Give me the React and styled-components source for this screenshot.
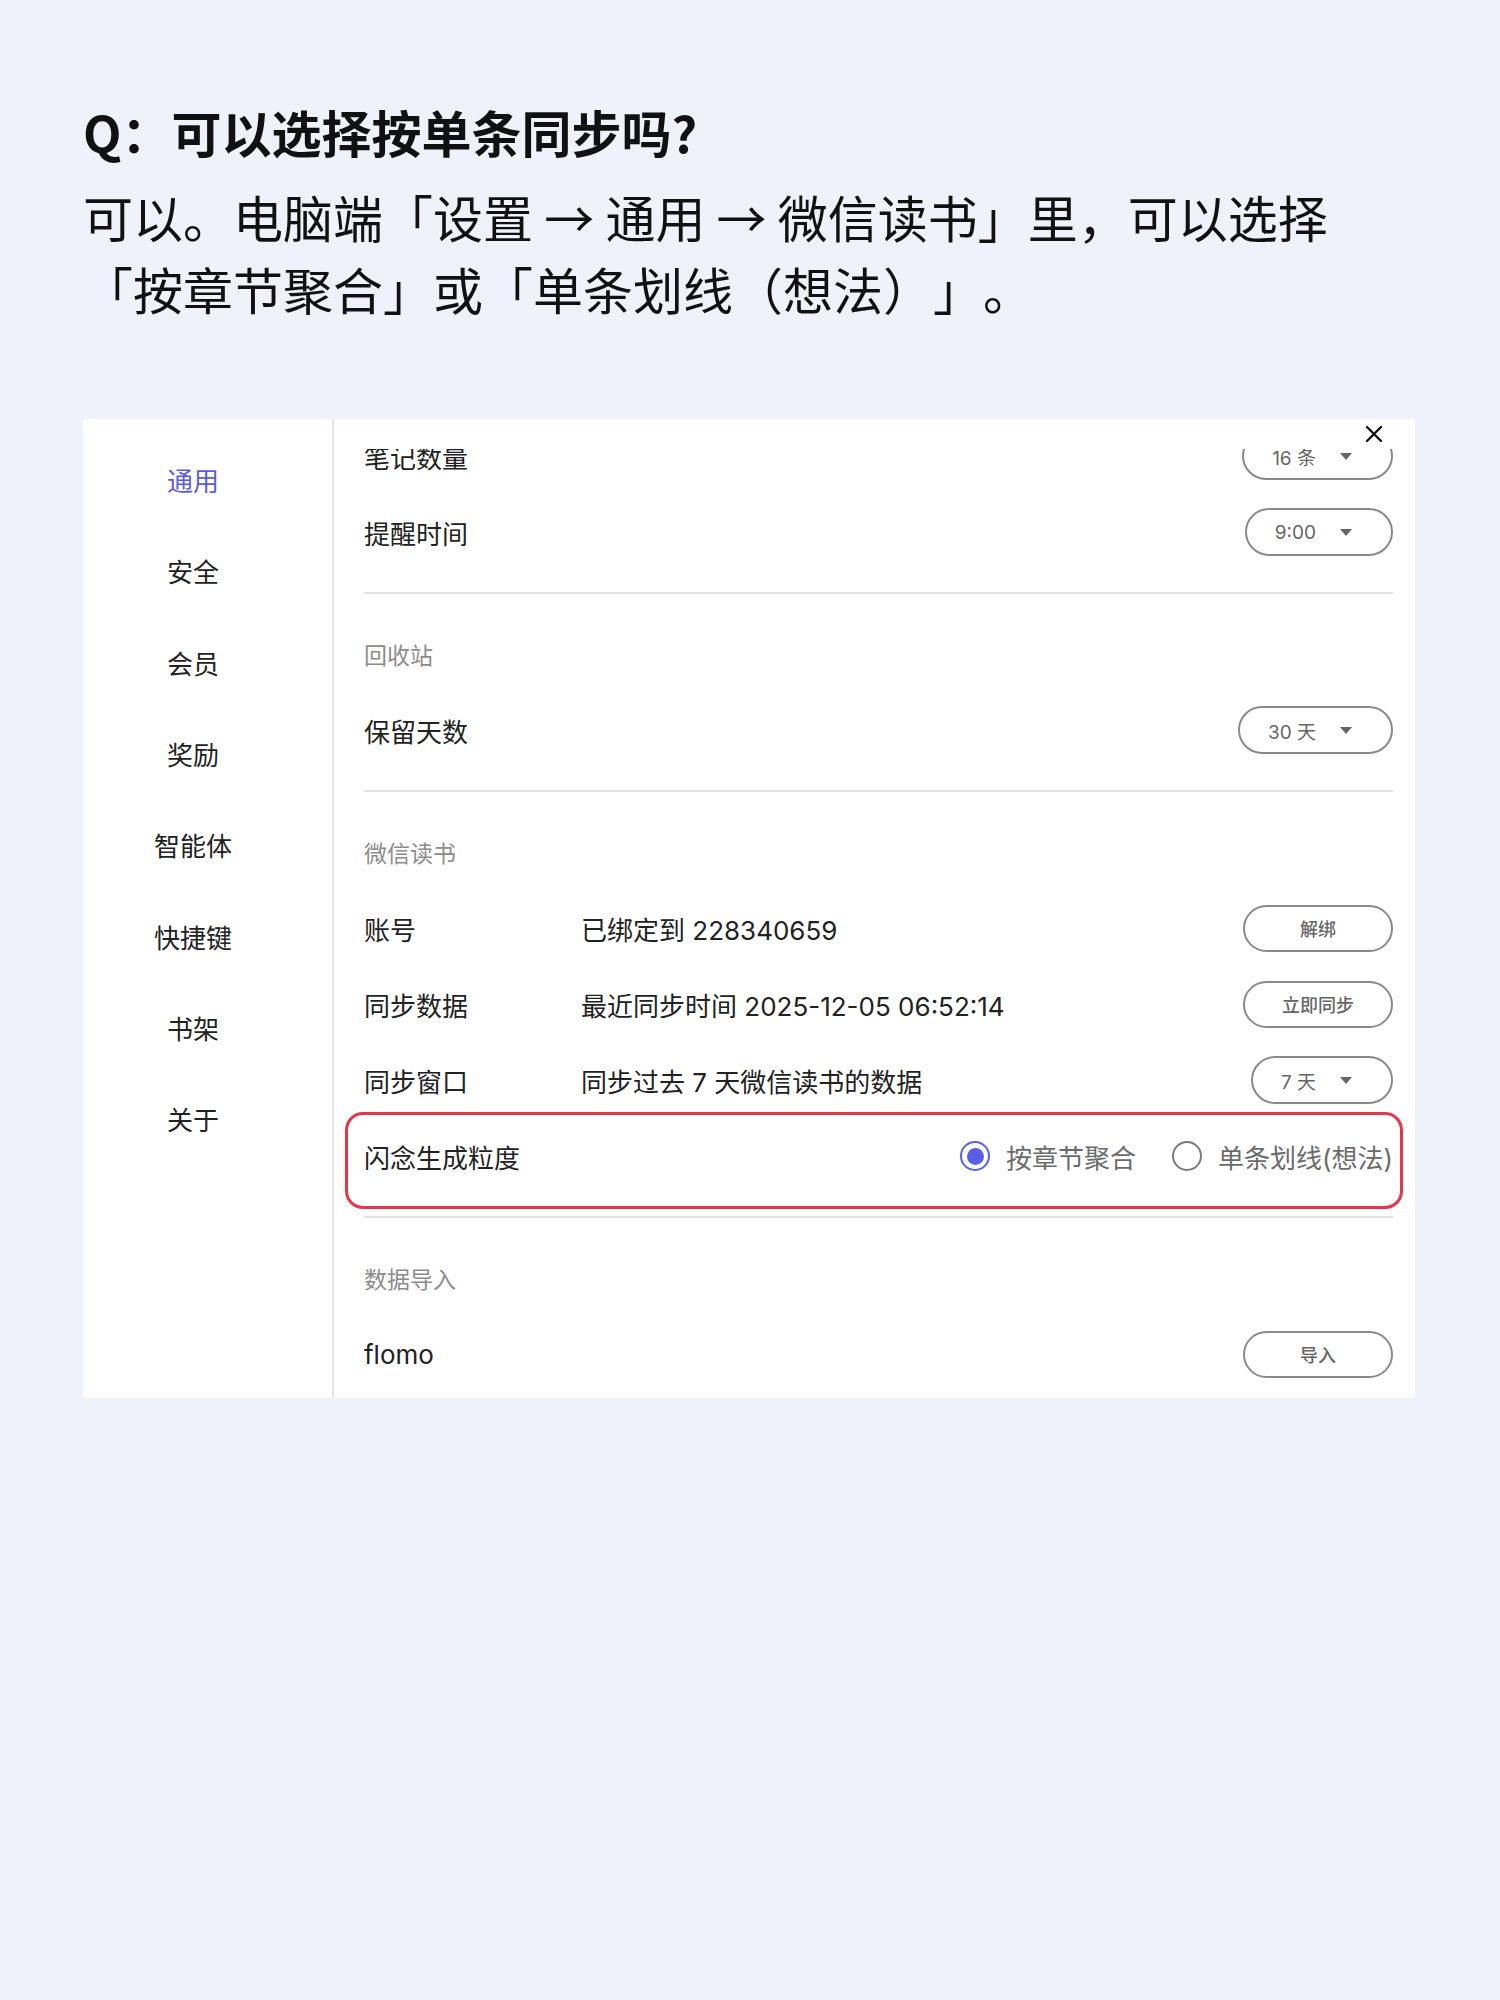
import React from 'react';
import styled, { createGlobalStyle } from 'styled-components';

const GlobalStyle = createGlobalStyle`
  html, body {
    margin: 0;
    padding: 0;
    background: #eff2fb;
  }
  body {
    font-family: Inter, "Noto Sans CJK SC", sans-serif;
    text-spacing-trim: space-all;
  }
`;

const Page = styled.div`
  width: 1500px;
  min-height: 2000px;
  box-sizing: border-box;
  padding: 96px 85px 0 83px;
  background: #eff2fb;
  color: #111;
`;

const Question = styled.h1`
  margin: 0;
  font-family: "Noto Sans CJK SC", sans-serif;
  font-size: 50px;
  line-height: 70px;
  font-weight: 600;
`;

const Answer = styled.p`
  margin: 14px 0 0;
  font-family: "Noto Sans CJK SC", sans-serif;
  font-size: 50px;
  line-height: 72px;
  font-weight: 400;
  text-spacing-trim: space-all;
`;

const Card = styled.div`
  margin-top: 95px;
  height: 979px;
  background: #fff;
  display: flex;
  overflow: hidden;
`;

const Sidebar = styled.nav`
  width: 251px;
  flex-shrink: 0;
  box-sizing: border-box;
  border-right: 2px solid #e6e6e9;
  padding: 15px 29px 0 0;
  display: flex;
  flex-direction: column;
`;

const NavItem = styled.div`
  height: 91.3px;
  display: flex;
  align-items: center;
  justify-content: center;
  font-size: 26px;
  color: ${(props) => (props.active ? '#5b5ce0' : '#222')};
`;

const Content = styled.div`
  flex: 1;
  display: flex;
  flex-direction: column;
  min-width: 0;
`;

const TopBar = styled.div`
  height: 30px;
  flex-shrink: 0;
  display: flex;
  align-items: center;
  justify-content: flex-end;
  padding-right: 32px;
`;

const Scroll = styled.div`
  flex: 1;
  overflow: hidden;
`;

// content is scrolled a little, so the first row sits under the top bar
const ScrollInner = styled.div`
  margin-top: -31px;
`;

const Section = styled.section`
  margin: 0 22px 0 30px;
  padding: ${(props) => (props.first ? '0 0 22px' : '22px 0')};
  border-top: ${(props) => (props.first ? 'none' : '2px solid #e4e4e6')};
`;

const SectionTitle = styled.div`
  height: 76px;
  display: flex;
  align-items: center;
  font-size: 23px;
  color: #8c8c8c;
`;

const Row = styled.div`
  position: relative;
  height: 76px;
  display: grid;
  grid-template-columns: 217px 1fr auto;
  align-items: center;
`;

const Label = styled.div`
  font-size: 26px;
  color: #222;
  white-space: nowrap;
`;

const Value = styled.div`
  font-size: 26px;
  color: #222;
  white-space: nowrap;
`;

const Select = styled.div`
  height: 48px;
  box-sizing: border-box;
  border: 2px solid #8a8a8a;
  border-radius: 24px;
  display: flex;
  align-items: center;
  gap: 24px;
  padding: 0 39px 0 28px;
  font-size: 19px;
  color: #666;
`;

const Caret = styled.span`
  width: 0;
  height: 0;
  border-left: 6px solid transparent;
  border-right: 6px solid transparent;
  border-top: 7px solid #666;
`;

const Button = styled.div`
  width: 150px;
  height: 47px;
  box-sizing: border-box;
  border: 2px solid #8a8a8a;
  border-radius: 24px;
  display: flex;
  align-items: center;
  justify-content: center;
  font-size: 18px;
  font-weight: 500;
  color: #666;
`;

const RadioGroup = styled.div`
  display: flex;
  align-items: center;
  gap: 36px;
`;

const RadioOption = styled.label`
  display: flex;
  align-items: center;
  gap: 16px;
  font-size: 26px;
  color: #6b6b6b;
  white-space: nowrap;
`;

const RadioCircle = styled.span`
  width: 30px;
  height: 30px;
  box-sizing: border-box;
  border-radius: 50%;
  border: 2px solid ${(props) => (props.checked ? '#5b5fe6' : '#7a7a7a')};
  display: flex;
  align-items: center;
  justify-content: center;

  &::after {
    content: '';
    width: 17px;
    height: 17px;
    border-radius: 50%;
    background: ${(props) => (props.checked ? '#5b5fe6' : 'transparent')};
  }
`;

const Highlight = styled.div`
  position: absolute;
  top: -6px;
  bottom: -15px;
  left: -19px;
  right: -10px;
  border: 3px solid #e5374a;
  border-radius: 18px;
  pointer-events: none;
`;

const navItems = ['通用', '安全', '会员', '奖励', '智能体', '快捷键', '书架', '关于'];

const CloseIcon = () => (
  <svg width="18" height="18" viewBox="0 0 18 18">
    <path d="M2 2 L16 16 M16 2 L2 16" stroke="#111" strokeWidth="2.4" strokeLinecap="round" />
  </svg>
);

const Dropdown = ({ children }) => (
  <Select>
    <span>{children}</span>
    <Caret />
  </Select>
);

const App = () => {
  return (
    <Page>
      <GlobalStyle />
      <Question>Q：可以选择按单条同步吗?</Question>
      <Answer>
        可以。电脑端「设置 → 通用 → 微信读书」里，可以选择
        <br />
        「按章节聚合」或「单条划线（想法）」。
      </Answer>

      <Card>
        <Sidebar>
          {navItems.map((item, i) => (
            <NavItem key={item} active={i === 0}>
              {item}
            </NavItem>
          ))}
        </Sidebar>

        <Content>
          <TopBar>
            <CloseIcon />
          </TopBar>
          <Scroll>
            <ScrollInner>
              <Section first>
                <Row>
                  <Label>笔记数量</Label>
                  <span />
                  <Dropdown>16 条</Dropdown>
                </Row>
                <Row>
                  <Label>提醒时间</Label>
                  <span />
                  <Dropdown>9:00</Dropdown>
                </Row>
              </Section>

              <Section>
                <SectionTitle>回收站</SectionTitle>
                <Row>
                  <Label>保留天数</Label>
                  <span />
                  <Dropdown>30 天</Dropdown>
                </Row>
              </Section>

              <Section>
                <SectionTitle>微信读书</SectionTitle>
                <Row>
                  <Label>账号</Label>
                  <Value>已绑定到 228340659</Value>
                  <Button>解绑</Button>
                </Row>
                <Row>
                  <Label>同步数据</Label>
                  <Value>最近同步时间 2025-12-05 06:52:14</Value>
                  <Button>立即同步</Button>
                </Row>
                <Row>
                  <Label>同步窗口</Label>
                  <Value>同步过去 7 天微信读书的数据</Value>
                  <Dropdown>7 天</Dropdown>
                </Row>
                <Row>
                  <Label>闪念生成粒度</Label>
                  <span />
                  <RadioGroup>
                    <RadioOption>
                      <RadioCircle checked />
                      按章节聚合
                    </RadioOption>
                    <RadioOption>
                      <RadioCircle />
                      单条划线(想法)
                    </RadioOption>
                  </RadioGroup>
                  <Highlight />
                </Row>
              </Section>

              <Section>
                <SectionTitle>数据导入</SectionTitle>
                <Row>
                  <Label>flomo</Label>
                  <span />
                  <Button>导入</Button>
                </Row>
              </Section>
            </ScrollInner>
          </Scroll>
        </Content>
      </Card>
    </Page>
  );
};

export default App;
